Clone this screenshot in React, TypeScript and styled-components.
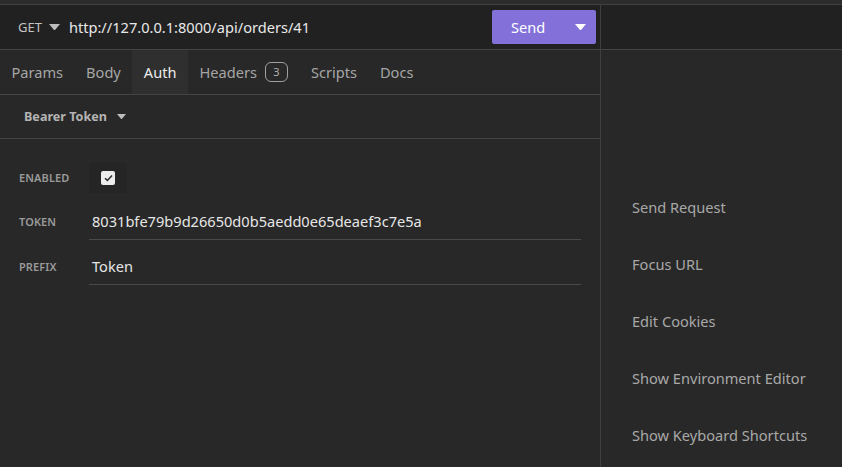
import styled, { createGlobalStyle } from 'styled-components';

const GlobalStyle = createGlobalStyle`
  html, body {
    margin: 0;
    padding: 0;
    background: #282828;
    font-family: 'Noto Sans', 'Open Sans', sans-serif;
    overflow: hidden;
  }
`;

const tabs = ['Params', 'Body', 'Auth', 'Headers', 'Scripts', 'Docs'];

const shortcuts = [
  'Send Request',
  'Focus URL',
  'Edit Cookies',
  'Show Environment Editor',
  'Show Keyboard Shortcuts',
];

function Caret({ size = 10, color = '#cfcfcf' }: { size?: number; color?: string }) {
  return (
    <svg width={size} height={size * 0.6} viewBox="0 0 10 6">
      <path d="M0 0 L10 0 L5 6 Z" fill={color} />
    </svg>
  );
}

function App() {
  return (
    <>
      <GlobalStyle />
      <Page>
        <TopStrip />
        <Main>
          <LeftPane>
            <UrlBar>
              <Method>
                GET
                <Caret size={11} color="#bdbdbd" />
              </Method>
              <Url>http://127.0.0.1:8000/api/orders/41</Url>
              <SendButton>
                <SendLabel>Send</SendLabel>
                <Caret size={11} color="#ffffff" />
              </SendButton>
            </UrlBar>
            <TabBar>
              {tabs.map((t) => (
                <Tab key={t} $active={t === 'Auth'}>
                  {t}
                  {t === 'Headers' && <Badge>3</Badge>}
                </Tab>
              ))}
            </TabBar>
            <AuthTypeRow>
              <AuthType>
                Bearer Token
                <Caret size={9} color="#bdbdbd" />
              </AuthType>
            </AuthTypeRow>
            <Form>
              <FieldRow $height={35}>
                <FieldLabel>ENABLED</FieldLabel>
                <CheckWrap>
                  <CheckBox>
                    <svg width="9" height="8" viewBox="0 0 9 8">
                      <path
                        d="M1 4.2 L3.4 6.4 L8 1.4"
                        stroke="#2a2a2a"
                        strokeWidth="1.5"
                        fill="none"
                      />
                    </svg>
                  </CheckBox>
                </CheckWrap>
              </FieldRow>
              <FieldRow $height={38}>
                <FieldLabel>TOKEN</FieldLabel>
                <FieldValue>8031bfe79b9d26650d0b5aedd0e65deaef3c7e5a</FieldValue>
              </FieldRow>
              <FieldRow $height={38}>
                <FieldLabel>PREFIX</FieldLabel>
                <FieldValue>Token</FieldValue>
              </FieldRow>
            </Form>
          </LeftPane>
          <RightPane>
            <RightHeader />
            <ShortcutList>
              {shortcuts.map((s) => (
                <Shortcut key={s}>{s}</Shortcut>
              ))}
            </ShortcutList>
          </RightPane>
        </Main>
      </Page>
    </>
  );
}

export default App;

const Page = styled.div`
  width: 842px;
  height: 467px;
  display: flex;
  flex-direction: column;
  background: #282828;
`;

const TopStrip = styled.div`
  height: 4px;
  background: #2c2c2c;
  border-bottom: 1px solid #3f3f3f;
`;

const Main = styled.div`
  flex: 1;
  display: flex;
`;

const LeftPane = styled.div`
  width: 600px;
  display: flex;
  flex-direction: column;
  border-right: 1px solid #3f3f3f;
`;

const UrlBar = styled.div`
  height: 45px;
  box-sizing: border-box;
  display: flex;
  align-items: center;
  background: #212121;
  border-bottom: 1px solid #444444;
  padding: 0 4px 0 18px;
`;

const Method = styled.div`
  display: flex;
  align-items: center;
  gap: 7px;
  font-size: 13px;
  color: #c4c4c4;
  margin-right: 9px;
`;

const Url = styled.div`
  flex: 1;
  font-size: 14.6px;
  color: #e8e8e8;
`;

const SendButton = styled.div`
  width: 104px;
  height: 34px;
  box-sizing: border-box;
  display: flex;
  align-items: center;
  background: #8371d9;
  border-radius: 2px;
  padding: 0 10px 0 19px;
  color: #ffffff;
`;

const SendLabel = styled.span`
  flex: 1;
  font-size: 14.6px;
`;

const TabBar = styled.div`
  height: 45px;
  box-sizing: border-box;
  display: flex;
  align-items: stretch;
  border-bottom: 1px solid #444444;
`;

const Tab = styled.div<{ $active?: boolean }>`
  display: flex;
  align-items: center;
  gap: 8px;
  padding: 0 11.5px 1px;
  font-size: 14.6px;
  color: ${(p) => (p.$active ? '#ececec' : '#a6a6a6')};
  background: ${(p) => (p.$active ? '#2f2f2f' : 'transparent')};
`;

const Badge = styled.span`
  display: inline-flex;
  align-items: center;
  justify-content: center;
  width: 23px;
  height: 20px;
  box-sizing: border-box;
  border: 1px solid #a0a0a0;
  border-radius: 6px;
  font-size: 11px;
  color: #b0b0b0;
`;

const AuthTypeRow = styled.div`
  height: 44px;
  box-sizing: border-box;
  display: flex;
  align-items: center;
  padding-left: 24px;
  border-bottom: 1px solid #444444;
`;

const AuthType = styled.div`
  display: flex;
  align-items: center;
  gap: 10px;
  font-size: 12.6px;
  font-weight: 700;
  color: #b4b4b4;
`;

const Form = styled.div`
  display: flex;
  flex-direction: column;
  padding: 21px 19px 0 19px;
  gap: 7px;
`;

const FieldRow = styled.div<{ $height: number }>`
  height: ${(p) => p.$height}px;
  display: flex;
  align-items: center;
`;

const FieldLabel = styled.div`
  width: 70px;
  font-size: 11px;
  font-weight: 600;
  color: #9a9a9a;
  letter-spacing: 0.1px;
`;

const CheckWrap = styled.div`
  width: 38px;
  height: 30px;
  display: flex;
  align-items: center;
  justify-content: center;
  background: #252525;
  margin-left: 0;
`;

const CheckBox = styled.div`
  width: 14px;
  height: 14px;
  display: flex;
  align-items: center;
  justify-content: center;
  background: #ececec;
  border-radius: 2px;
`;

const FieldValue = styled.div`
  flex: 1;
  height: 100%;
  box-sizing: border-box;
  display: flex;
  align-items: center;
  padding: 0 3px;
  font-size: 14.6px;
  color: #e6e6e6;
  border-bottom: 1px solid #4a4a4a;
`;

const RightPane = styled.div`
  flex: 1;
  display: flex;
  flex-direction: column;
`;

const RightHeader = styled.div`
  height: 45px;
  box-sizing: border-box;
  background: #212121;
  border-bottom: 1px solid #444444;
`;

const ShortcutList = styled.div`
  display: flex;
  flex-direction: column;
  padding: 146px 0 0 31px;
  gap: 35px;
`;

const Shortcut = styled.div`
  font-size: 14.6px;
  line-height: 22px;
  color: #a8a8a8;
`;
